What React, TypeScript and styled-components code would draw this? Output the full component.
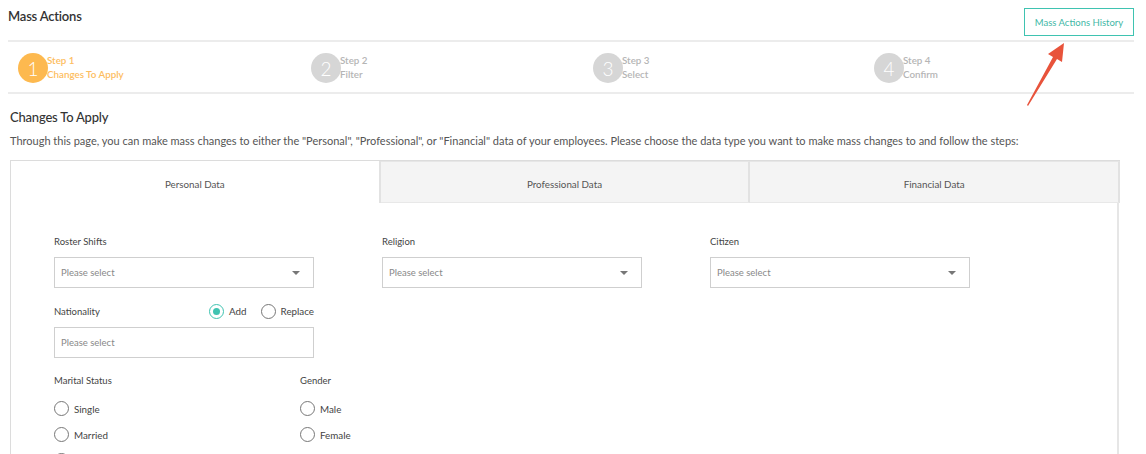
import React from "react";
import styled, { createGlobalStyle } from "styled-components";

const Global = createGlobalStyle`
  html, body { margin: 0; padding: 0; background: #fff; }
  body { font-family: Lato, "Open Sans", "Liberation Sans", sans-serif; color: #333; overflow: hidden; }
  * { box-sizing: border-box; }
`;

const Page = styled.div`
  position: relative;
  width: 1146px;
  height: 454px;
  padding: 0 12px 0 8px;
  overflow: hidden;
`;

const Header = styled.div`
  display: flex;
  justify-content: space-between;
  align-items: flex-start;
  height: 42px;
  border-bottom: 2px solid #ececec;
`;

const Title = styled.h1`
  margin: 8px 0 0;
  font-size: 13px;
  font-weight: 600;
  color: #333;
  letter-spacing: -0.2px;
`;

const HistoryButton = styled.button`
  margin-top: 8px;
  width: 110px;
  height: 28px;
  border: 1.5px solid #3fc3b1;
  background: #fff;
  color: #3fb8a6;
  font-family: inherit;
  font-size: 9.5px;
  padding: 0;
`;

const Steps = styled.div`
  display: grid;
  grid-template-columns: 293px 282px 281px 1fr;
  height: 52px;
  border-bottom: 2px solid #ececec;
`;

const Step = styled.div`
  display: flex;
  align-items: center;
  padding-left: 10px;
  padding-top: 2px;
`;

const Circle = styled.div<{ $active?: boolean }>`
  width: 30px;
  height: 30px;
  border-radius: 50%;
  background: ${(p) => (p.$active ? "#fdb94f" : "#d6d6d6")};
  color: #fff;
  display: flex;
  align-items: center;
  justify-content: center;
  font-size: 19px;
  font-weight: 300;
  flex-shrink: 0;
`;

const StepText = styled.div<{ $active?: boolean }>`
  margin-left: -1px;
  margin-top: -3px;
  display: flex;
  flex-direction: column;
  font-size: 9.8px;
  font-weight: 600;
  line-height: 14px;
  color: ${(p) => (p.$active ? "#fdbd60" : "#b5b5b5")};
`;

const Content = styled.div`
  padding: 0 2px;
`;

const SectionTitle = styled.h2`
  margin: 15px 0 0;
  font-size: 13px;
  font-weight: 500;
  color: #333;
  letter-spacing: -0.2px;
`;

const Intro = styled.p`
  margin: 9px 0 0;
  font-size: 11px;
  color: #555;
  white-space: nowrap;
`;

const TabsBox = styled.div`
  margin-top: 13px;
  width: 1110px;
  border: 1px solid #dcdcdc;
  border-right: none;
  border-bottom: none;
`;

const TabRow = styled.div`
  display: grid;
  grid-template-columns: repeat(3, 1fr);
  height: 42px;
`;

const Tab = styled.div<{ $active?: boolean }>`
  display: flex;
  align-items: center;
  justify-content: center;
  font-size: 9.8px;
  color: #555;
  background: ${(p) => (p.$active ? "#fff" : "#f4f4f4")};
  border-right: 2px solid #e2e2e2;
  border-top: ${(p) => (p.$active ? "none" : "1px solid #e6e6e6")};
  border-bottom: ${(p) => (p.$active ? "none" : "1px solid #e8e8e8")};
  padding-top: 3px;
`;

const Panel = styled.div`
  height: 260px;
  border-right: 2px solid #e6e6e6;
  margin-right: 1px;
  padding: 28px 0 0 43px;
`;

const FieldGrid = styled.div`
  display: grid;
  grid-template-columns: 260px 260px 260px;
  column-gap: 68px;
`;

const Field = styled.div`
  display: flex;
  flex-direction: column;
`;

const LabelRow = styled.div`
  display: flex;
  justify-content: space-between;
  align-items: center;
  height: 20px;
`;

const Label = styled.label`
  font-size: 9.5px;
  color: #444;
`;

const SelectBox = styled.div`
  margin-top: 6px;
  height: 31px;
  border: 1px solid #cfcfcf;
  display: flex;
  align-items: center;
  justify-content: space-between;
  padding: 0 13px 0 6px;
  font-size: 9.5px;
  color: #888;
`;

const Caret = styled.span`
  width: 0;
  height: 0;
  border-left: 4px solid transparent;
  border-right: 4px solid transparent;
  border-top: 4px solid #777;
`;

const RadioGroup = styled.div<{ $vertical?: boolean }>`
  display: flex;
  flex-direction: ${(p) => (p.$vertical ? "column" : "row")};
  gap: ${(p) => (p.$vertical ? "9px" : "14px")};
`;

const RadioItem = styled.div`
  display: flex;
  align-items: center;
  gap: 5px;
  font-size: 9.8px;
  color: #444;
  height: 17px;
`;

const RadioCircle = styled.span<{ $checked?: boolean }>`
  width: 15px;
  height: 15px;
  border-radius: 50%;
  border: 1px solid ${(p) => (p.$checked ? "#3fc3b1" : "#777")};
  display: flex;
  align-items: center;
  justify-content: center;
  &::after {
    content: "";
    width: 7px;
    height: 7px;
    border-radius: 50%;
    background: ${(p) => (p.$checked ? "#3fc3b1" : "transparent")};
  }
`;

const SecondRow = styled.div`
  margin-top: 13px;
  width: 260px;
`;

const StatusRow = styled.div`
  margin-top: 17px;
  display: grid;
  grid-template-columns: 246px 200px;
`;

const GroupLabel = styled.div`
  font-size: 9.5px;
  color: #444;
  margin-bottom: 14px;
`;

const Arrow = styled.svg`
  position: absolute;
  left: 1020px;
  top: 38px;
  width: 60px;
  height: 72px;
`;

const Radio = ({ label, checked }: { label: string; checked?: boolean }) => (
  <RadioItem>
    <RadioCircle $checked={checked} />
    {label}
  </RadioItem>
);

const Select = ({ caret = true }: { caret?: boolean }) => (
  <SelectBox>
    Please select
    {caret && <Caret />}
  </SelectBox>
);

export default function App() {
  const steps = [
    ["1", "Step 1", "Changes To Apply"],
    ["2", "Step 2", "Filter"],
    ["3", "Step 3", "Select"],
    ["4", "Step 4", "Confirm"],
  ];
  return (
    <Page>
      <Global />
      <Header>
        <Title>Mass Actions</Title>
        <HistoryButton>Mass Actions History</HistoryButton>
      </Header>
      <Steps>
        {steps.map(([n, s, l], i) => (
          <Step key={n}>
            <Circle $active={i === 0}>{n}</Circle>
            <StepText $active={i === 0}>
              <span>{s}</span>
              <span>{l}</span>
            </StepText>
          </Step>
        ))}
      </Steps>
      <Content>
        <SectionTitle>Changes To Apply</SectionTitle>
        <Intro>
          Through this page, you can make mass changes to either the "Personal", "Professional", or "Financial" data of
          your employees. Please choose the data type you want to make mass changes to and follow the steps:
        </Intro>
        <TabsBox>
          <TabRow>
            <Tab $active>Personal Data</Tab>
            <Tab>Professional Data</Tab>
            <Tab>Financial Data</Tab>
          </TabRow>
          <Panel>
            <FieldGrid>
              <Field>
                <LabelRow>
                  <Label>Roster Shifts</Label>
                </LabelRow>
                <Select />
              </Field>
              <Field>
                <LabelRow>
                  <Label>Religion</Label>
                </LabelRow>
                <Select />
              </Field>
              <Field>
                <LabelRow>
                  <Label>Citizen</Label>
                </LabelRow>
                <Select />
              </Field>
            </FieldGrid>
            <SecondRow>
              <Field>
                <LabelRow>
                  <Label>Nationality</Label>
                  <RadioGroup>
                    <Radio label="Add" checked />
                    <Radio label="Replace" />
                  </RadioGroup>
                </LabelRow>
                <Select caret={false} />
              </Field>
            </SecondRow>
            <StatusRow>
              <div>
                <GroupLabel>Marital Status</GroupLabel>
                <RadioGroup $vertical>
                  <Radio label="Single" />
                  <Radio label="Married" />
                  <Radio label="Divorced" />
                </RadioGroup>
              </div>
              <div>
                <GroupLabel>Gender</GroupLabel>
                <RadioGroup $vertical>
                  <Radio label="Male" />
                  <Radio label="Female" />
                </RadioGroup>
              </div>
            </StatusRow>
          </Panel>
        </TabsBox>
      </Content>
      <Arrow viewBox="0 0 60 72">
        <polygon points="7,67 33,19 28,16 44,5 42,24 37,21 8,68" fill="#e8533b" />
      </Arrow>
    </Page>
  );
}
